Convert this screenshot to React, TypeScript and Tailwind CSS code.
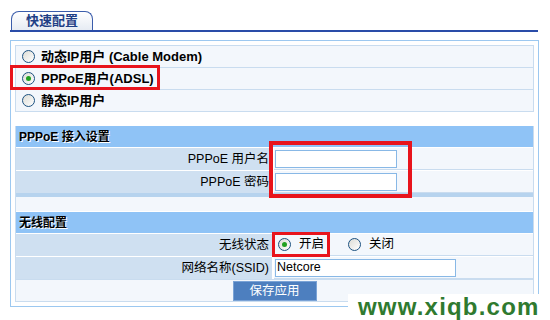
import React from "react";

const font = { fontFamily: '"Liberation Sans", "Noto Sans CJK SC", sans-serif' };

const Radio = ({ checked }: { checked?: boolean }) => (
  <span className="inline-flex items-center justify-center w-[13px] h-[13px] rounded-full border border-[#1c5180] bg-gradient-to-br from-[#dcdcd6] to-white shrink-0">
    {checked && <span className="w-[5px] h-[5px] rounded-full bg-[#21a121]" />}
  </span>
);

const OptionRow = ({ label, checked }: { label: string; checked?: boolean }) => (
  <div className="h-[22px] flex items-center pl-[6px] gap-[6px] bg-[#f3f7fc] border-b border-[#c9dcef] text-[13px] font-bold text-black">
    <Radio checked={checked} />
    <span>{label}</span>
  </div>
);

const Header = ({ title }: { title: string }) => (
  <div className="h-[21px] flex items-center pl-[3px] bg-[#8fc3f6] text-[12px] font-bold text-black [text-shadow:1px_1px_0_#fff]">
    {title}
  </div>
);

const FormRow = ({ label, children }: { label: string; children: React.ReactNode }) => (
  <div className="h-[23px] flex border-t border-white">
    <div className="w-[258px] bg-[#cfe0f1] flex items-center justify-end pr-[3px] text-[12.5px] text-black border-r-2 border-white">
      {label}
    </div>
    <div className="flex-1 bg-[#f3f7fc] flex items-center pl-[1px] border-b border-[#c9dcef]">{children}</div>
  </div>
);

export default function App() {
  return (
    <div className="w-[550px] h-[320px] bg-white relative overflow-hidden" style={font}>
      <div className="pt-[11px] pl-[11px]">
        <div className="w-[82px] h-[19px] border border-b-0 border-[#3b5dab] rounded-t-[8px] bg-gradient-to-b from-white to-[#e6ebf3] flex items-center pl-[14px] text-[13px] font-bold text-[#1f3f86]">
          快速配置
        </div>
      </div>
      <div className="ml-[10px] w-[528px] h-[2px] bg-[#2a4ca8]" />

      <div className="ml-[10px] mt-[8px] w-[529px] h-[267px] border border-[#9cc8f0] p-[4px]">
        <div className="border border-[#c9dcef] border-b-0">
          <OptionRow label="动态IP用户 (Cable Modem)" />
          <OptionRow label="PPPoE用户(ADSL)" checked />
          <OptionRow label="静态IP用户" />
        </div>

        <div className="mt-[14px] border-x border-[#c9dcef]">
          <Header title="PPPoE 接入设置" />
          <FormRow label="PPPoE 用户名">
            <div className="w-[122px] h-[18px] bg-white border border-[#88b8e6]" />
          </FormRow>
          <FormRow label="PPPoE 密码">
            <div className="w-[122px] h-[18px] bg-white border border-[#88b8e6]" />
          </FormRow>
          <div className="h-[4px] bg-[#b6d3ee]" />
          <div className="h-[15px] bg-[#f3f7fc] border-b border-white" />
          <Header title="无线配置" />
          <FormRow label="无线状态">
            <div className="flex items-center gap-[8px] pl-[3px] text-[12.5px]">
              <Radio checked />
              <span>开启</span>
            </div>
            <div className="flex items-center gap-[8px] pl-[24px] text-[12.5px]">
              <Radio />
              <span>关闭</span>
            </div>
          </FormRow>
          <FormRow label="网络名称(SSID)">
            <div className="w-[181px] h-[18px] bg-white border border-[#88b8e6] flex items-center pl-[1px] text-[12.5px] text-black">
              Netcore
            </div>
          </FormRow>
          <div className="h-[23px] bg-[#f3f7fc] flex items-center justify-center border-y border-[#c9dcef]">
            <button className="w-[84px] h-[20px] bg-[#4d7fbf] text-white text-[12.5px] border border-[#7aa3d6]">
              保存应用
            </button>
          </div>
        </div>
      </div>

      {/* red highlight boxes */}
      <div className="absolute left-[10px] top-[65px] w-[150px] h-[25px] border-[3px] border-[#e8141c]" />
      <div className="absolute left-[269px] top-[141px] w-[143px] h-[57px] border-[4px] border-[#e8141c]" />
      <div className="absolute left-[272px] top-[232px] w-[58px] h-[25px] border-[3px] border-[#e8141c]" />

      {/* watermark */}
      <div className="absolute left-[348px] top-[294px] w-[200px] h-[26px] bg-white flex items-center pl-[10px] text-[24px] font-bold text-[#2f7a2f] leading-none tracking-[1.2px]">
        www.xiqb.com
      </div>
    </div>
  );
}
